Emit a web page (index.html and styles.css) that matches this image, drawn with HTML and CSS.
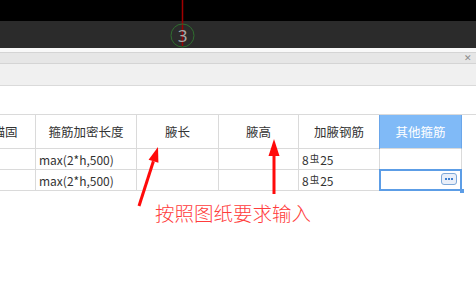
FILE: index.html
```html
<!DOCTYPE html>
<html lang="zh-CN">
<head>
    <meta charset="UTF-8">
    <title>其他箍筋</title>
    <link rel="stylesheet" href="styles.css">
</head>
<body>
    <div class="page">
        <div class="canvas"></div>
        <div class="status-bar"></div>
        <svg class="axis-mark" width="476" height="48" viewBox="0 0 476 48">
            <line x1="182.5" y1="0" x2="182.5" y2="46" stroke="#a00000" stroke-width="1.5"/>
            <circle cx="182.5" cy="35.5" r="11.5" fill="none" stroke="#2f6e2f" stroke-width="1"/>
            <text x="182.5" y="42" text-anchor="middle" font-size="17" fill="#a8a8a8" font-family="Noto Sans, sans-serif">3</text>
        </svg>

        <div class="spacer"></div>
        <div class="title-bar">
            <span class="close">&#x2715;</span>
        </div>
        <div class="toolbar"></div>
        <div class="blank"></div>

        <div class="grid">
            <div class="cell head">锚固</div>
            <div class="cell head">箍筋加密长度</div>
            <div class="cell head">腋长</div>
            <div class="cell head">腋高</div>
            <div class="cell head">加腋钢筋</div>
            <div class="cell head active">其他箍筋</div>

            <div class="cell"></div>
            <div class="cell">max(2*h,500)</div>
            <div class="cell"></div>
            <div class="cell"></div>
            <div class="cell">8<span class="steel">虫</span>25</div>
            <div class="cell"></div>

            <div class="cell"></div>
            <div class="cell">max(2*h,500)</div>
            <div class="cell"></div>
            <div class="cell"></div>
            <div class="cell">8<span class="steel">虫</span>25</div>
            <div class="cell selected">
                <span class="more-btn"><i></i><i></i><i></i></span>
                <span class="handle"></span>
            </div>
        </div>

        <!-- annotation -->
        <svg class="notes" width="476" height="305" viewBox="0 0 476 305">
            <line x1="139" y1="206" x2="153.4" y2="161.3" stroke="#ff0a0a" stroke-width="3"/>
            <polygon points="158,147 158.4,162.8 148.6,159.8" fill="#ff0a0a"/>
            <line x1="274" y1="194" x2="274" y2="154" stroke="#ff0a0a" stroke-width="3"/>
            <polygon points="274,139 279.5,156 268.5,156" fill="#ff0a0a"/>
        </svg>
        <div class="note-text">按照图纸要求输入</div>
    </div>
</body>
</html>
```

FILE: styles.css
```css
body {
    margin: 0;
    background-color: #ffffff;
    font-family: "Noto Sans CJK SC", "Noto Sans", sans-serif;
    overflow: hidden;
}

.page {
    position: relative;
    width: 476px;
    height: 305px;
}

.canvas {
    height: 21px;
    background-color: #000000;
}

.status-bar {
    height: 27px;
    background-color: #2b2b2b;
}

.axis-mark {
    position: absolute;
    top: 0;
    left: 0;
}

.spacer {
    height: 4px;
    background-color: #f8f8f8;
}

.title-bar {
    height: 10px;
    background-color: #e6e6e6;
    border-top: 1px solid #d4d4d4;
    border-bottom: 1px solid #d4d4d4;
    display: flex;
    justify-content: flex-end;
    align-items: center;
}

.close {
    font-size: 9px;
    line-height: 10px;
    color: #8a8a8a;
    margin-right: 4px;
}

.toolbar {
    height: 21px;
    background-color: #f0f0f0;
    border-bottom: 1px solid #dadada;
}

.blank {
    height: 28px;
}

.grid {
    display: grid;
    grid-template-columns: 61px 101px 82px 80px 81px 82px;
    grid-template-rows: 34px 21px 21px;
    margin-left: -25px;
    border-top: 1px solid #dadada;
    width: 501px;
}

.cell {
    position: relative;
    box-sizing: border-box;
    border-right: 1px solid #dadada;
    border-bottom: 1px solid #dadada;
    font-size: 12px;
    color: #333333;
    display: flex;
    align-items: center;
    padding-left: 3px;
    white-space: nowrap;
}

.cell.head {
    justify-content: center;
    padding-left: 0;
    font-size: 12.5px;
}

.cell.active {
    background-color: #80baf7;
    color: #ffffff;
    border-right-color: #6aa6ea;
    box-shadow: -1px 0 0 #6aa6ea;
}

.steel {
    font-size: 9.5px;
    margin: 0 1px;
    position: relative;
    top: -1px;
}

.selected::after {
    content: "";
    position: absolute;
    top: -1px;
    left: -1px;
    right: -1px;
    bottom: -1px;
    border: 2px solid #5c9de6;
}

.more-btn {
    position: absolute;
    right: 4px;
    top: 3px;
    width: 14px;
    height: 10px;
    border: 1px solid #7ea8d8;
    border-radius: 3px;
    background-color: #e9eff9;
    display: flex;
    align-items: center;
    justify-content: center;
    gap: 1px;
}

.more-btn i {
    width: 2px;
    height: 2px;
    background-color: #3d7fd0;
}

.handle {
    position: absolute;
    right: -3px;
    bottom: -3px;
    width: 4px;
    height: 4px;
    background-color: #5c9de6;
    z-index: 1;
}

.notes {
    position: absolute;
    top: 0;
    left: 0;
}

.note-text {
    position: absolute;
    left: 155px;
    top: 200px;
    font-size: 19.5px;
    line-height: 26px;
    color: #ff3c3c;
    font-weight: 300;
}
```
